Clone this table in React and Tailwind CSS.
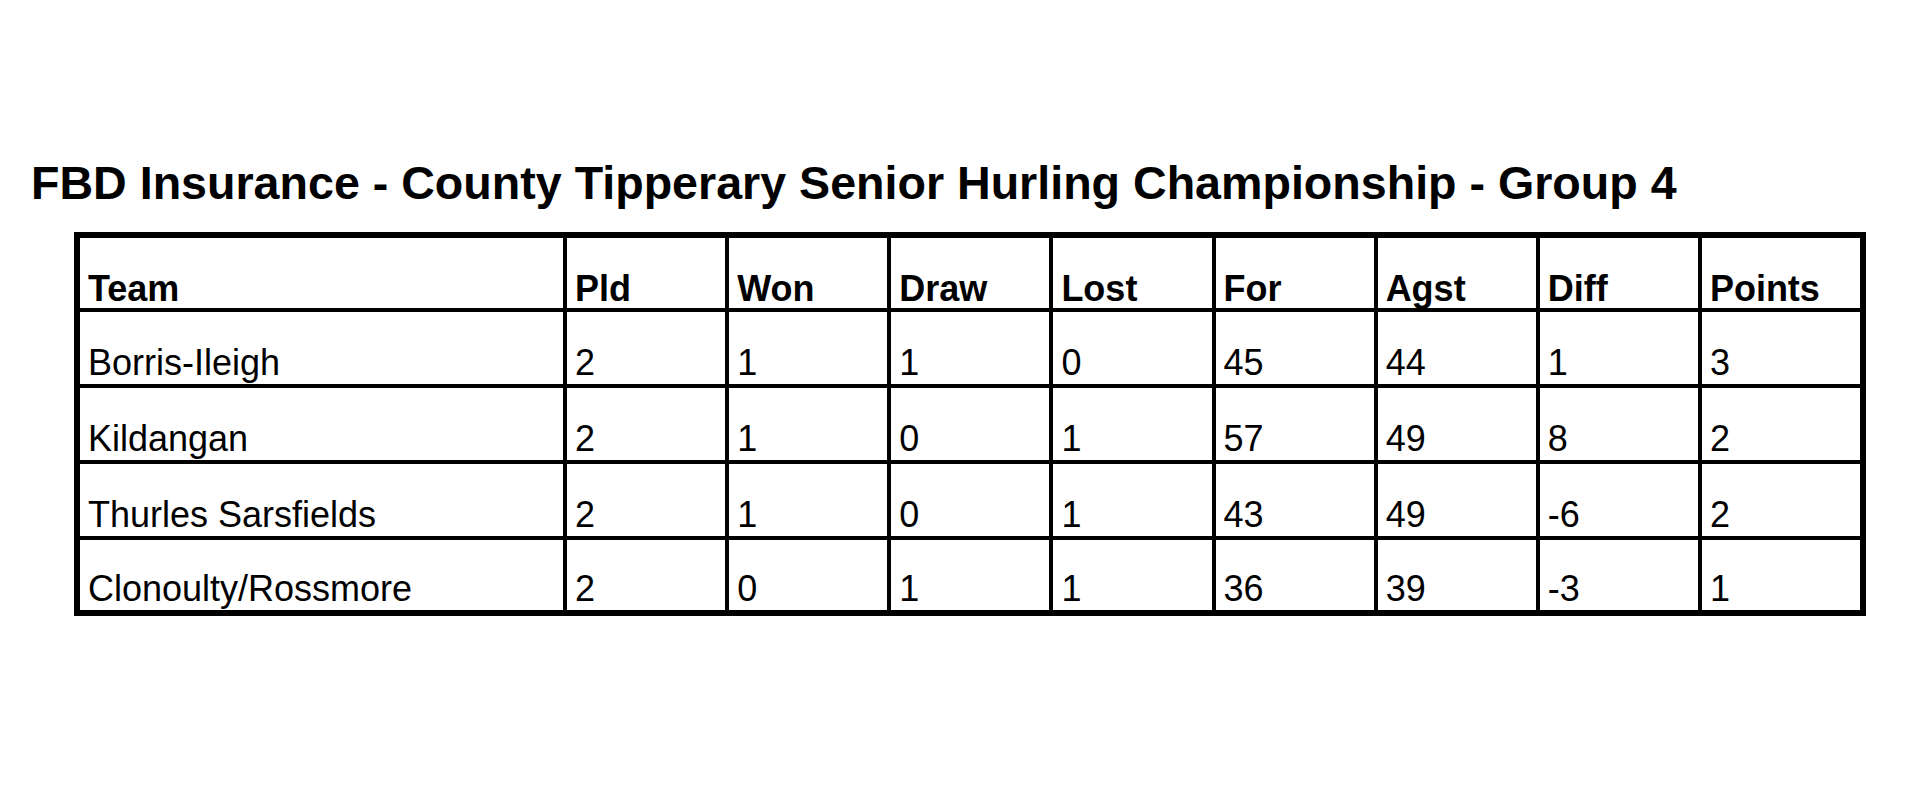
const headers = ['Team', 'Pld', 'Won', 'Draw', 'Lost', 'For', 'Agst', 'Diff', 'Points']

const rows = [
  ['Borris-Ileigh', '2', '1', '1', '0', '45', '44', '1', '3'],
  ['Kildangan', '2', '1', '0', '1', '57', '49', '8', '2'],
  ['Thurles Sarsfields', '2', '1', '0', '1', '43', '49', '-6', '2'],
  ['Clonoulty/Rossmore', '2', '0', '1', '1', '36', '39', '-3', '1'],
]

export default function App() {
  return (
    <div className="min-h-[796px] w-[1920px] bg-white text-black font-['Liberation_Sans',Arial,sans-serif]">
      <div className="flex flex-col pt-[160px]">
        <h1 className="ml-[31px] text-[46.6px] font-bold leading-none whitespace-nowrap">
          FBD Insurance - County Tipperary Senior Hurling Championship - Group 4
        </h1>

        {/* standings grid */}
        <div className="ml-[74px] mt-[25px] w-[1792px] border-[6px] border-black bg-black">
          <div className="grid grid-cols-[483px_repeat(8,1fr)] grid-rows-[70px_72px_72px_72px_70px] gap-[4px]">
            {headers.map((h) => (
              <div key={h} className="flex items-end bg-white pl-2 pb-[1px] text-[36px] font-bold leading-none">
                {h}
              </div>
            ))}
            {rows.map((r) =>
              r.map((c, i) => (
                <div key={r[0] + i} className="flex items-end bg-white pl-2 pb-[3px] text-[36px] leading-none whitespace-nowrap">
                  {c}
                </div>
              ))
            )}
          </div>
        </div>
      </div>
    </div>
  )
}
